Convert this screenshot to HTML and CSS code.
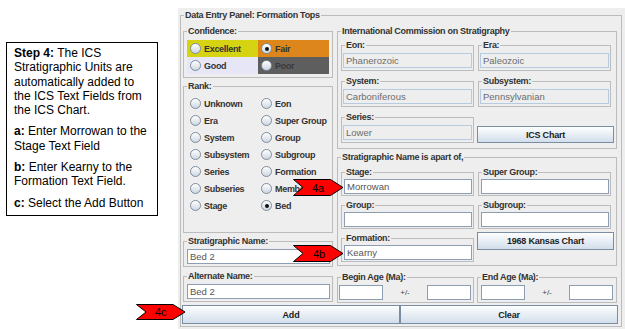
FILE: index.html
```html
<!DOCTYPE html>
<html lang="en">
<head>
    <meta charset="UTF-8">
    <meta name="viewport" content="width=device-width, initial-scale=1.0">
    <title>Data Entry Panel: Formation Tops</title>
    <link rel="stylesheet" href="styles.css">
</head>
<body>
    <div class="page">
        <div class="note">
            <p><b>Step 4:</b> The ICS<br>Stratigraphic Units are<br>automatically added to<br>the ICS Text Fields from<br>the ICS Chart.</p>
            <p><b>a:</b> Enter Morrowan to the<br>Stage Text Field</p>
            <p><b>b:</b> Enter Kearny to the<br>Formation Text Field.</p>
            <p><b>c:</b> Select the Add Button</p>
        </div>

        <div class="panel">
            <div class="group outer">
                <div class="title">Data Entry Panel: Formation Tops</div>
                <div class="columns">
                    <div class="col-left">
                        <div class="group confidence">
                            <div class="title">Confidence:</div>
                            <div class="choices">
                                <span class="cell excellent"><span class="radio"></span>Excellent</span>
                                <span class="cell fair"><span class="radio on"></span>Fair</span>
                                <span class="cell good"><span class="radio"></span>Good</span>
                                <span class="cell poor"><span class="radio"></span>Poor</span>
                            </div>
                        </div>

                        <div class="group rank">
                            <div class="title">Rank:</div>
                            <div class="choices">
                                <span class="cell"><span class="radio"></span>Unknown</span>
                                <span class="cell"><span class="radio"></span>Eon</span>
                                <span class="cell"><span class="radio"></span>Era</span>
                                <span class="cell"><span class="radio"></span>Super Group</span>
                                <span class="cell"><span class="radio"></span>System</span>
                                <span class="cell"><span class="radio"></span>Group</span>
                                <span class="cell"><span class="radio"></span>Subsystem</span>
                                <span class="cell"><span class="radio"></span>Subgroup</span>
                                <span class="cell"><span class="radio"></span>Series</span>
                                <span class="cell"><span class="radio"></span>Formation</span>
                                <span class="cell"><span class="radio"></span>Subseries</span>
                                <span class="cell"><span class="radio"></span>Member</span>
                                <span class="cell"><span class="radio"></span>Stage</span>
                                <span class="cell"><span class="radio on"></span>Bed</span>
                            </div>
                        </div>

                        <div class="group name-box strat">
                            <div class="title">Stratigraphic Name:</div>
                            <div class="field">Bed 2</div>
                        </div>

                        <div class="group name-box alt">
                            <div class="title">Alternate Name:</div>
                            <div class="field">Bed 2</div>
                        </div>
                    </div>

                    <div class="col-right">
                        <div class="group ics">
                            <div class="title">International Commission on Stratigraphy</div>
                            <div class="pair first">
                                <div class="group unit">
                                    <div class="title">Eon:</div>
                                    <div class="field locked">Phanerozoic</div>
                                </div>
                                <div class="group unit">
                                    <div class="title">Era:</div>
                                    <div class="field locked">Paleozoic</div>
                                </div>
                            </div>
                            <div class="pair">
                                <div class="group unit">
                                    <div class="title">System:</div>
                                    <div class="field locked">Carboniferous</div>
                                </div>
                                <div class="group unit">
                                    <div class="title">Subsystem:</div>
                                    <div class="field locked">Pennsylvanian</div>
                                </div>
                            </div>
                            <div class="pair bottom">
                                <div class="group unit">
                                    <div class="title">Series:</div>
                                    <div class="field locked">Lower</div>
                                </div>
                                <button class="btn chart">ICS Chart</button>
                            </div>
                        </div>

                        <div class="group apart">
                            <div class="title">Stratigraphic Name is apart of,</div>
                            <div class="pair first">
                                <div class="group unit">
                                    <div class="title">Stage:</div>
                                    <div class="field">Morrowan</div>
                                </div>
                                <div class="group unit">
                                    <div class="title">Super Group:</div>
                                    <div class="field"></div>
                                </div>
                            </div>
                            <div class="pair">
                                <div class="group unit">
                                    <div class="title">Group:</div>
                                    <div class="field"></div>
                                </div>
                                <div class="group unit">
                                    <div class="title">Subgroup:</div>
                                    <div class="field"></div>
                                </div>
                            </div>
                            <div class="pair top">
                                <div class="group unit">
                                    <div class="title">Formation:</div>
                                    <div class="field">Kearny</div>
                                </div>
                                <button class="btn chart">1968 Kansas Chart</button>
                            </div>
                        </div>

                        <div class="ages">
                            <div class="group age begin">
                                <div class="title">Begin Age (Ma):</div>
                                <div class="age-row">
                                    <div class="field"></div>
                                    <span class="pm">+/-</span>
                                    <div class="field"></div>
                                </div>
                            </div>
                            <div class="group age end">
                                <div class="title">End Age (Ma):</div>
                                <div class="age-row">
                                    <div class="field"></div>
                                    <span class="pm">+/-</span>
                                    <div class="field"></div>
                                </div>
                            </div>
                        </div>
                    </div>
                </div>

                <div class="btn-row">
                    <button class="btn">Add</button>
                    <button class="btn">Clear</button>
                </div>
            </div>
        </div>

        <!-- callout arrows -->
        <svg class="callout a" width="51" height="17" viewBox="0 0 51 17">
            <polygon points="0.5,0.5 37.5,0.5 50,8.5 37.5,16.5 0.5,16.5 10,8.5"/>
            <text x="19" y="12.5">4a</text>
        </svg>
        <svg class="callout b" width="51" height="17" viewBox="0 0 51 17">
            <polygon points="0.5,0.5 37.5,0.5 50,8.5 37.5,16.5 0.5,16.5 10,8.5"/>
            <text x="20" y="12.5">4b</text>
        </svg>
        <svg class="callout c" width="50" height="16" viewBox="0 0 50 16">
            <polygon points="0.5,0.5 37,0.5 49,8 37,15.5 0.5,15.5 10,8"/>
            <text x="19" y="12">4c</text>
        </svg>
    </div>
</body>
</html>
```

FILE: styles.css
```css
/* General styles */
* {
    box-sizing: border-box;
    margin: 0;
    padding: 0;
}

body {
    background: #fff;
    font-family: 'Liberation Sans', Arial, sans-serif;
}

.page {
    position: relative;
    display: flex;
    align-items: flex-start;
    width: 625px;
    height: 329px;
    overflow: hidden;
}

/* instruction box */
.note {
    width: 152px;
    height: 174px;
    margin: 42px 0 0 6px;
    padding: 3px 0 0 7px;
    border: 1px solid #000;
    font-size: 12px;
    line-height: 14.3px;
    color: #000;
}

.note p {
    margin-bottom: 7px;
    white-space: nowrap;
}

/* swing panel */
.panel {
    width: 447px;
    height: 321px;
    margin: 8px 0 0 20px;
    padding: 7px 3px 0 2px;
    background: #eeeeee;
}

.group {
    border: 1px solid #bcbcbc;
}

.title {
    display: table;
    height: 13px;
    margin: -7px 0 0 3px;
    padding: 0 1px;
    background: #eeeeee;
    font-size: 9px;
    font-weight: bold;
    line-height: 13px;
    letter-spacing: -0.3px;
    color: #333;
    white-space: nowrap;
}

.outer {
    height: 312px;
}

.columns {
    display: flex;
    gap: 4px;
    margin: 9px 0 0 2px;
}

.col-left {
    display: flex;
    flex-direction: column;
    width: 150px;
}

.col-right {
    display: flex;
    flex-direction: column;
    width: 280px;
}

/* radio choices */
.choices {
    display: grid;
    grid-template-columns: 71px 71px;
    grid-auto-rows: 17px;
    margin: 2px 0 0 3px;
}

.cell {
    display: flex;
    align-items: center;
    gap: 2px;
    padding-left: 3px;
    font-size: 9px;
    font-weight: bold;
    letter-spacing: -0.3px;
    color: #333;
    white-space: nowrap;
}

.radio {
    position: relative;
    width: 11px;
    height: 11px;
    margin-right: 1px;
    border: 1px solid #7f8d9c;
    border-radius: 50%;
    background: linear-gradient(#ffffff, #cdd7e3);
    flex-shrink: 0;
}

.radio.on::after {
    content: "";
    position: absolute;
    top: 2.5px;
    left: 2.5px;
    width: 4px;
    height: 4px;
    border-radius: 50%;
    background: #111;
}

.confidence {
    height: 47px;
}

.excellent { background: #d6d412; }
.fair { background: #dd861b; }
.good { background: #e6e6f7; }
.poor { background: #5e5e5e; color: #3b3b3b; }

.rank {
    height: 147px;
    margin-top: 8px;
}

/* text fields */
.field {
    height: 15px;
    padding-left: 2px;
    border: 1px solid #8e9eb2;
    background: #fff;
    font-size: 9.5px;
    line-height: 13px;
    color: #555;
    white-space: nowrap;
    overflow: hidden;
}

.field.locked {
    border-color: #b7cbe0;
    background: #eeeeee;
    color: #6c6c6c;
}

.name-box {
    height: 26px;
}

.name-box .field {
    margin: 1px 2px 0 3px;
}

.strat {
    margin-top: 8px;
}

.alt {
    margin-top: 9px;
}

/* ICS and parent units */
.ics {
    height: 118px;
}

.pair {
    display: flex;
    gap: 4px;
    margin: 10px 0 0 3px;
}

.pair.first {
    margin-top: 7px;
}

.pair.bottom {
    align-items: flex-end;
}

.pair.top {
    align-items: flex-start;
}

.unit {
    width: 133px;
    height: 26px;
}

.unit .field {
    margin: 1px 1px 0 1px;
}

.apart {
    height: 109px;
    margin-top: 8px;
}

.apart .pair {
    margin-top: 9px;
}

.apart .pair.first {
    margin-top: 8px;
}

.apart .unit {
    height: 24px;
}

.apart .unit .field {
    margin-top: 0;
    margin-left: 2px;
}

.btn {
    height: 19px;
    border: 1px solid #7b8da2;
    background: linear-gradient(#fdfeff, #d2deeb);
    font-family: 'Liberation Sans', Arial, sans-serif;
    font-size: 9px;
    font-weight: bold;
    letter-spacing: -0.2px;
    color: #222;
}

.chart {
    width: 137px;
    height: 18px;
    margin-left: -1px;
}

.pair.bottom .chart {
    height: 17px;
}

.pair.top .chart {
    margin-top: -6px;
}

/* ages */
.ages {
    display: flex;
    gap: 3px;
    margin-top: 11px;
}

.age {
    height: 26px;
}

.begin { width: 137px; }
.end { width: 140px; }

.age-row {
    display: flex;
    align-items: center;
    margin-top: 1px;
}

.begin .age-row { padding: 0 2px 0 1px; }
.end .age-row { padding: 0 3px 0 3px; }

.age-row .field {
    width: 44px;
}

.pm {
    flex: 1;
    text-align: center;
    font-size: 8px;
    color: #444;
}

.btn-row {
    display: flex;
    margin: 2px 3px 0 1px;
}

.btn-row .btn {
    flex: 1;
}

/* callout arrows */
.callout {
    position: absolute;
    overflow: visible;
}

.callout polygon {
    fill: #ff0000;
    stroke: #000;
    stroke-width: 1;
}

.callout text {
    font-family: 'Liberation Sans', Arial, sans-serif;
    font-size: 11px;
    fill: #000;
}

.callout.a { left: 293px; top: 179px; }
.callout.b { left: 293px; top: 245px; }
.callout.c { left: 136px; top: 304px; }
```
